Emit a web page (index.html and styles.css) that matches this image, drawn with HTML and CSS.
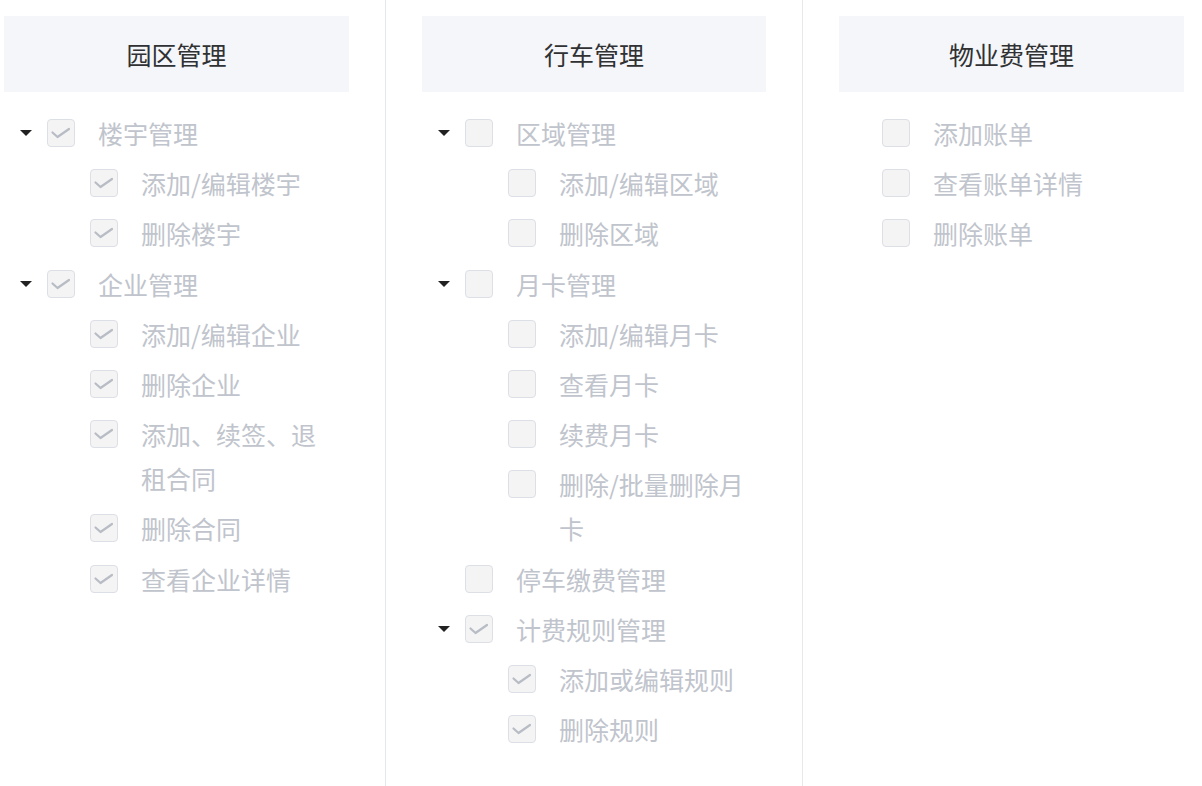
FILE: index.html
```html
<!DOCTYPE html>
<html lang="zh-CN">
<head>
<meta charset="utf-8">
<title>权限设置</title>
<link rel="stylesheet" href="styles.css">
</head>
<body>
<div class="board">
  <section class="col col-first">
    <div class="col-head">园区管理</div>
    <ul class="tree">
      <li class="node"><span class="caret"></span><span class="cb"><svg class="tick" viewBox="0 0 28 28"><polyline points="5.5,13.5 10.5,18 22,10"/></svg></span><span class="label">楼宇管理</span></li>
      <li class="node lv2"><span class="cb"><svg class="tick" viewBox="0 0 28 28"><polyline points="5.5,13.5 10.5,18 22,10"/></svg></span><span class="label">添加/编辑楼宇</span></li>
      <li class="node lv2"><span class="cb"><svg class="tick" viewBox="0 0 28 28"><polyline points="5.5,13.5 10.5,18 22,10"/></svg></span><span class="label">删除楼宇</span></li>
      <li class="node"><span class="caret"></span><span class="cb"><svg class="tick" viewBox="0 0 28 28"><polyline points="5.5,13.5 10.5,18 22,10"/></svg></span><span class="label">企业管理</span></li>
      <li class="node lv2"><span class="cb"><svg class="tick" viewBox="0 0 28 28"><polyline points="5.5,13.5 10.5,18 22,10"/></svg></span><span class="label">添加/编辑企业</span></li>
      <li class="node lv2"><span class="cb"><svg class="tick" viewBox="0 0 28 28"><polyline points="5.5,13.5 10.5,18 22,10"/></svg></span><span class="label">删除企业</span></li>
      <li class="node lv2"><span class="cb"><svg class="tick" viewBox="0 0 28 28"><polyline points="5.5,13.5 10.5,18 22,10"/></svg></span><span class="label">添加、续签、退租合同</span></li>
      <li class="node lv2"><span class="cb"><svg class="tick" viewBox="0 0 28 28"><polyline points="5.5,13.5 10.5,18 22,10"/></svg></span><span class="label">删除合同</span></li>
      <li class="node lv2"><span class="cb"><svg class="tick" viewBox="0 0 28 28"><polyline points="5.5,13.5 10.5,18 22,10"/></svg></span><span class="label">查看企业详情</span></li>
    </ul>
  </section>
  <section class="col col-mid">
    <div class="col-head">行车管理</div>
    <ul class="tree">
      <li class="node"><span class="caret"></span><span class="cb"></span><span class="label">区域管理</span></li>
      <li class="node lv2"><span class="cb"></span><span class="label">添加/编辑区域</span></li>
      <li class="node lv2"><span class="cb"></span><span class="label">删除区域</span></li>
      <li class="node"><span class="caret"></span><span class="cb"></span><span class="label">月卡管理</span></li>
      <li class="node lv2"><span class="cb"></span><span class="label">添加/编辑月卡</span></li>
      <li class="node lv2"><span class="cb"></span><span class="label">查看月卡</span></li>
      <li class="node lv2"><span class="cb"></span><span class="label">续费月卡</span></li>
      <li class="node lv2"><span class="cb"></span><span class="label">删除/批量删除月卡</span></li>
      <li class="node"><span class="caret leaf"></span><span class="cb"></span><span class="label">停车缴费管理</span></li>
      <li class="node"><span class="caret"></span><span class="cb"><svg class="tick" viewBox="0 0 28 28"><polyline points="5.5,13.5 10.5,18 22,10"/></svg></span><span class="label">计费规则管理</span></li>
      <li class="node lv2"><span class="cb"><svg class="tick" viewBox="0 0 28 28"><polyline points="5.5,13.5 10.5,18 22,10"/></svg></span><span class="label">添加或编辑规则</span></li>
      <li class="node lv2"><span class="cb"><svg class="tick" viewBox="0 0 28 28"><polyline points="5.5,13.5 10.5,18 22,10"/></svg></span><span class="label">删除规则</span></li>
    </ul>
  </section>
  <section class="col col-last">
    <div class="col-head">物业费管理</div>
    <ul class="tree">
      <li class="node"><span class="caret leaf"></span><span class="cb"></span><span class="label">添加账单</span></li>
      <li class="node"><span class="caret leaf"></span><span class="cb"></span><span class="label">查看账单详情</span></li>
      <li class="node"><span class="caret leaf"></span><span class="cb"></span><span class="label">删除账单</span></li>
    </ul>
  </section>
</div>
</body>
</html>
```

FILE: styles.css
```css
* { box-sizing: border-box; }
html, body {
  margin: 0;
  padding: 0;
  background: #ffffff;
  font-family: "Noto Sans CJK SC", "Noto Sans", sans-serif;
  overflow: hidden;
}
.board {
  display: flex;
  align-items: stretch;
  height: 786px;
}
.col {
  flex: none;
  padding-top: 16px;
}
.col-first {
  margin-left: 4px;
  width: 382px;
  padding-right: 36px;
  border-right: 1px solid #e6e8ec;
}
.col-mid {
  width: 417px;
  padding-left: 36px;
  padding-right: 36px;
  border-right: 1px solid #e6e8ec;
}
.col-last {
  width: 381px;
  padding-left: 36px;
}
.col-head {
  height: 76px;
  background: #f5f6fa;
  color: #303133;
  font-size: 25px;
  display: flex;
  align-items: center;
  justify-content: center;
}
.tree {
  list-style: none;
  margin: 16px 0 0;
  padding: 0 16px 0 0;
}
.node {
  display: flex;
  align-items: flex-start;
  padding: 3.1px 0;
  line-height: 44px;
  font-size: 25px;
  color: #c0c4cc;
}
.node.lv2 { padding-left: 86px; }
.caret {
  flex: none;
  width: 43px;
  height: 44px;
  position: relative;
}
.caret::before {
  content: "";
  position: absolute;
  left: 16px;
  top: 19px;
  border-left: 6px solid transparent;
  border-right: 6px solid transparent;
  border-top: 6px solid #222222;
}
.caret.leaf::before { display: none; }
.cb {
  flex: none;
  display: block;
  width: 28px;
  height: 28px;
  margin-top: 8px;
  border: 1px solid #dcdfe6;
  border-radius: 4px;
  background: #f4f4f5;
  position: relative;
  overflow: hidden;
}
.tick {
  position: absolute;
  left: -1px;
  top: -1px;
  width: 28px;
  height: 28px;
  fill: none;
  stroke: #b8bcc4;
  stroke-width: 2.2;
  stroke-linecap: round;
  stroke-linejoin: round;
}
.label {
  flex: 1;
  min-width: 0;
  margin-left: 23px;
}
```
